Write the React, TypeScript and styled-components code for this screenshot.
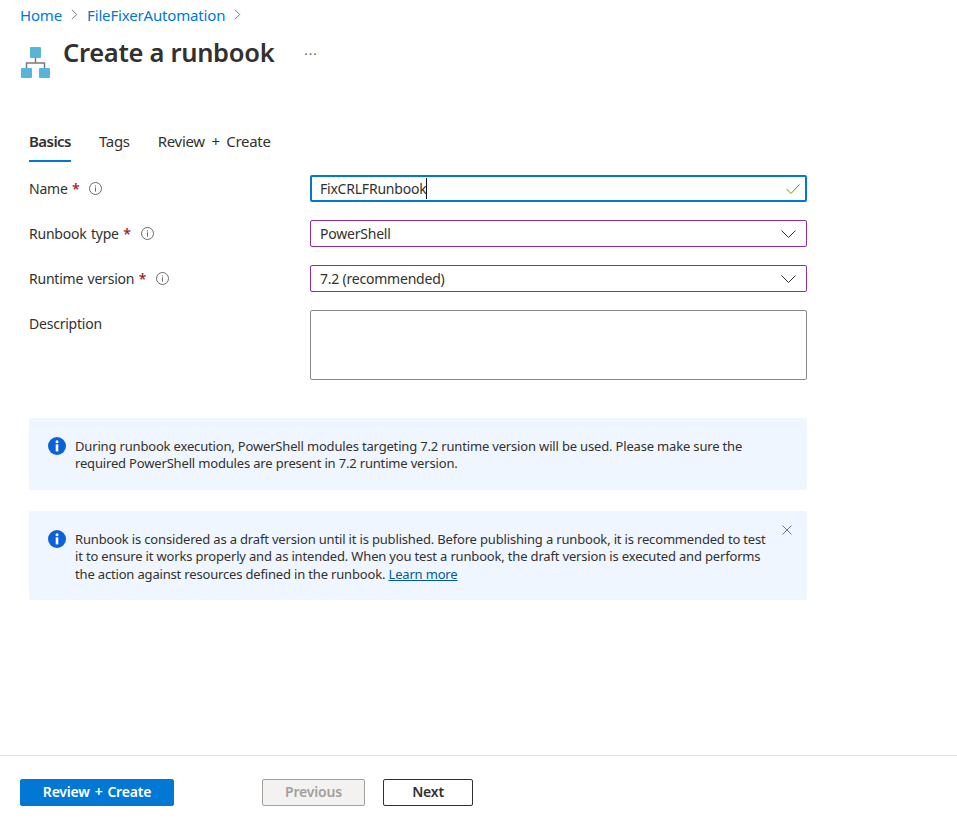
import React from "react";
import styled, { createGlobalStyle } from "styled-components";

const GlobalStyle = createGlobalStyle`
  html, body {
    margin: 0;
    padding: 0;
    background: #fff;
    font-family: "Noto Sans", "Open Sans", "Liberation Sans", sans-serif;
    color: #323130;
  }
`;

const InfoIcon = () => (
  <svg width="13" height="13" viewBox="0 0 13 13" fill="none">
    <circle cx="6.5" cy="6.5" r="6" stroke="#6b6b6b" />
    <rect x="6" y="5.4" width="1" height="4.2" fill="#6b6b6b" />
    <rect x="6" y="3.4" width="1" height="1.1" fill="#6b6b6b" />
  </svg>
);

const Chevron = () => (
  <svg width="15" height="8" viewBox="0 0 15 8" fill="none">
    <path d="M.5.5l7 7 7-7" stroke="#323130" strokeWidth="1" />
  </svg>
);

const BannerInfo = () => (
  <svg width="18" height="18" viewBox="0 0 18 18">
    <circle cx="9" cy="9" r="9" fill="#0b62d6" />
    <rect x="7.7" y="7.4" width="2.6" height="7" fill="#fff" />
    <circle cx="9" cy="4.8" r="1.5" fill="#fff" />
  </svg>
);

const BreadcrumbChevron = () => (
  <svg width="7" height="11" viewBox="0 0 7 11" fill="none">
    <path d="M1 .8l4.7 4.7L1 10.2" stroke="#777" strokeWidth="1" />
  </svg>
);

const App = () => (
  <Page>
    <GlobalStyle />
    <Main>
      <Breadcrumbs>
        <Crumb>Home</Crumb>
        <BreadcrumbChevron />
        <Crumb>FileFixerAutomation</Crumb>
        <BreadcrumbChevron />
      </Breadcrumbs>
      <Header>
        <svg width="29" height="31" viewBox="0 0 29 31">
          <path d="M14.500 11v5M5.500 21v-5h18v5" fill="none" stroke="#7a7a7a" strokeWidth="1.500" />
          <rect x="9" y="0" width="11" height="11" rx="1" fill="#59b4d9" />
          <rect x="0" y="21" width="11" height="10" rx="1" fill="#59b4d9" />
          <rect x="18" y="21" width="11" height="10" rx="1" fill="#59b4d9" />
        </svg>
        <Title>Create a runbook</Title>
        <More>···</More>
      </Header>
      <Tabs>
        <Tab $active>Basics</Tab>
        <Tab>Tags</Tab>
        <Tab>Review + Create</Tab>
      </Tabs>
      <Form>
        <Row>
          <Label>
            Name <Star>*</Star>
            <InfoIcon />
          </Label>
          <Focused>
            <Value>FixCRLFRunbook</Value>
            <Caret />
            <Spacer />
            <svg width="14" height="10" viewBox="0 0 14 10" fill="none">
              <path d="M.5 5l4.500 4.500L13.500.5" stroke="#57a300" strokeWidth="1" />
            </svg>
          </Focused>
        </Row>
        <Row>
          <Label>
            Runbook type <Star>*</Star>
            <InfoIcon />
          </Label>
          <Select>
            <Value>PowerShell</Value>
            <Spacer />
            <Chevron />
          </Select>
        </Row>
        <Row>
          <Label>
            Runtime version <Star>*</Star>
            <InfoIcon />
          </Label>
          <Select>
            <Value>7.2 (recommended)</Value>
            <Spacer />
            <Chevron />
          </Select>
        </Row>
        <Row>
          <Label>Description</Label>
          <TextArea />
        </Row>
      </Form>
      <Banners>
        <Banner>
          <BannerInfo />
          <BannerText>
            During runbook execution, PowerShell modules targeting 7.2 runtime version will be used. Please make sure the
            required PowerShell modules are present in 7.2 runtime version.
          </BannerText>
        </Banner>
        <Banner $tall>
          <BannerInfo />
          <BannerText>
            Runbook is considered as a draft version until it is published. Before publishing a runbook, it is recommended to test
            it to ensure it works properly and as intended. When you test a runbook, the draft version is executed and performs
            the action against resources defined in the runbook. <LearnMore>Learn more</LearnMore>
          </BannerText>
          <Close>
            <svg width="10" height="10" viewBox="0 0 10 10" fill="none">
              <path d="M.5.5l9 9M9.500.5l-9 9" stroke="#666" strokeWidth="0.9" />
            </svg>
          </Close>
        </Banner>
      </Banners>
    </Main>
    <Footer>
      <PrimaryButton>Review + Create</PrimaryButton>
      <DisabledButton>Previous</DisabledButton>
      <NextButton>Next</NextButton>
    </Footer>
  </Page>
);

const Page = styled.div`
  display: flex;
  flex-direction: column;
  width: 957px;
  height: 818px;
  overflow: hidden;
`;

const Main = styled.main`
  flex: 1;
  padding: 0 0 0 20px;
`;

const Breadcrumbs = styled.nav`
  display: flex;
  align-items: center;
  gap: 9px;
  height: 29px;
`;

const Crumb = styled.a`
  font-size: 15px;
  letter-spacing: -0.16px;
  color: #0078d4;
`;

const Header = styled.header`
  display: flex;
  align-items: flex-start;
  height: 81px;
  padding: 18px 0 0 1px;
  box-sizing: content-box;
`;

const Title = styled.h1`
  margin: -12px 0 0 13px;
  font-size: 25.500px;
  line-height: 34px;
  font-weight: 600;
  letter-spacing: -0.3px;
  color: #323130;
`;

const More = styled.span`
  margin: -3px 0 0 30px;
  font-size: 13px;
  line-height: 20px;
  letter-spacing: 1px;
  color: #555;
`;

const Tabs = styled.div`
  display: flex;
  gap: 28px;
  height: 34px;
  margin: 0 0 13px 9px;
`;

const Tab = styled.div<{ $active?: boolean }>`
  height: 32px;
  font-size: 15px;
  line-height: 27px;
  letter-spacing: ${(p) => (p.$active ? "-0.55px" : "-0.3px")};
  word-spacing: 3px;
  font-weight: ${(p) => (p.$active ? 600 : 400)};
  color: #323130;
  border-bottom: 2px solid ${(p) => (p.$active ? "#0078d4" : "transparent")};
`;

const Form = styled.div`
  display: flex;
  flex-direction: column;
  gap: 18px;
  margin-left: 9px;
`;

const Row = styled.div`
  display: flex;
  align-items: flex-start;
`;

const Label = styled.label`
  display: flex;
  align-items: center;
  flex: 0 0 281px;
  height: 27px;
  font-size: 14px;
  letter-spacing: -0.22px;
  word-spacing: 1px;
  white-space: pre;
  svg {
    margin-left: 10px;
  }
`;

const Star = styled.span`
  color: #a4262c;
  font-weight: 600;
`;

const Field = styled.div`
  display: flex;
  align-items: center;
  box-sizing: border-box;
  width: 497px;
  height: 27px;
  border-radius: 2px;
  padding: 0 9px;
  background: #fff;
`;

const Focused = styled(Field)`
  border: 2px solid #0078d4;
  padding: 0 5px 0 8px;
`;

const Select = styled(Field)`
  border: 1px solid #8a2da5;
  padding-right: 10px;
`;

const Value = styled.span`
  font-size: 14px;
  letter-spacing: -0.22px;
  color: #323130;
`;

const Caret = styled.span`
  width: 1px;
  height: 21px;
  background: #111;
`;

const Spacer = styled.span`
  flex: 1;
`;

const TextArea = styled(Field)`
  height: 70px;
  border: 1px solid #8a8886;
`;

const Banners = styled.div`
  display: flex;
  flex-direction: column;
  gap: 21px;
  width: 778px;
  margin: 38px 0 0 9px;
`;

const Banner = styled.section<{ $tall?: boolean }>`
  position: relative;
  display: flex;
  align-items: flex-start;
  gap: 9px;
  box-sizing: border-box;
  height: ${(p) => (p.$tall ? 89 : 72)}px;
  padding: 19px 19px 0 19px;
  border-radius: 2px;
  background: #eff6ff;
`;

const BannerText = styled.p`
  margin: 1px 0 0;
  width: 697px;
  font-size: 13px;
  line-height: 17.300px;
  letter-spacing: -0.17px;
  color: #323130;
`;

const LearnMore = styled.a`
  color: #005a9e;
  text-decoration: underline;
`;

const Close = styled.span`
  position: absolute;
  top: 14px;
  right: 15px;
  display: flex;
`;

const Footer = styled.footer`
  display: flex;
  align-items: flex-start;
  height: 63px;
  padding: 23px 0 0 20px;
  box-sizing: border-box;
  border-top: 1px solid #e1dfdd;
`;

const Button = styled.button`
  box-sizing: border-box;
  height: 27px;
  padding: 0 0 2px;
  border-radius: 2px;
  font-family: inherit;
  font-size: 14px;
  font-weight: 600;
  letter-spacing: -0.2px;
`;

const PrimaryButton = styled(Button)`
  width: 154px;
  border: 1px solid #0078d4;
  background: #0078d4;
  color: #fff;
  word-spacing: 1.500px;
`;

const DisabledButton = styled(Button)`
  width: 103px;
  margin-left: 88px;
  border: 1px solid #a19f9d;
  background: #f3f2f1;
  color: #a19f9d;
`;

const NextButton = styled(Button)`
  width: 90px;
  margin-left: 18px;
  border: 1px solid #323130;
  background: #fff;
  color: #323130;
`;

export default App;
